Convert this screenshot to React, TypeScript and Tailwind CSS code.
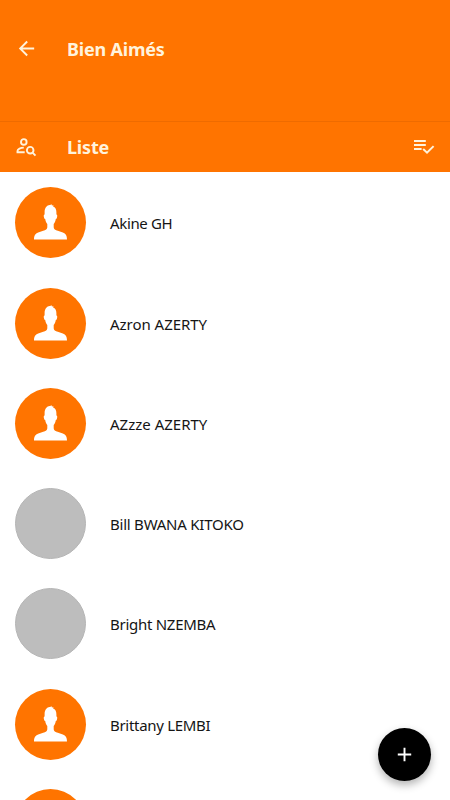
import { MdAdd, MdArrowBack } from "react-icons/md";

type Contact = { name: string; hasAvatar: boolean; tracking: string };

const contacts: Contact[] = [
  { name: "Akine GH", hasAvatar: true, tracking: "tracking-[-0.35px]" },
  { name: "Azron AZERTY", hasAvatar: true, tracking: "tracking-[-0.03px]" },
  { name: "AZzze AZERTY", hasAvatar: true, tracking: "tracking-normal" },
  { name: "Bill BWANA KITOKO", hasAvatar: false, tracking: "tracking-[-0.23px]" },
  { name: "Bright NZEMBA", hasAvatar: false, tracking: "tracking-[-0.27px]" },
  { name: "Brittany LEMBI", hasAvatar: true, tracking: "tracking-[-0.3px]" },
  { name: "", hasAvatar: true, tracking: "tracking-normal" },
];

function PersonSearchIcon() {
  return (
    <svg viewBox="0 0 24 24" className="size-6" fill="none" stroke="currentColor" strokeWidth="1.9">
      <circle cx="9.8" cy="6.9" r="2.8" />
      <path d="M9.8 12.6c-3.2.1-6.3 1.6-6.3 3.3v1.3h7.2" />
      <circle cx="16.2" cy="15.2" r="3.3" />
      <path d="M18.5 17.6l3 3" />
    </svg>
  );
}

function ListCheckIcon() {
  return (
    <svg viewBox="0 0 24 24" className="size-6" fill="none" stroke="currentColor" strokeWidth="2">
      <path d="M2 6.1h11.8M2 10h11.8M2 13.9h7.6" />
      <path d="M11.2 14.1l3.8 3.6 6.6-6.6" />
    </svg>
  );
}

function Avatar({ filled }: { filled: boolean }) {
  if (!filled) {
    return <div className="size-[71px] shrink-0 rounded-full border border-[#b5b5b5] bg-[#bdbdbd]" />;
  }
  return (
    <div className="size-[71px] shrink-0 rounded-full bg-[#ff7400]">
      <svg viewBox="0 0 71 71" className="size-full" fill="#fff">
        <path d="M36.6 17.2l.3 1.3 1.6-.3-.4 1.4c2.2.9 3.3 2.8 3.3 5.6v2.4c1 .1 1 1.4.6 2.8-.2.9-.6 1.5-1.2 1.6-.3 2.1-1 3.7-2.1 4.9v3.3c0 1.7 1.6 2.8 4.1 3.6l4.3 1.5c3.6 1.3 4.9 3 4.9 7.2H19c0-4.2 1.3-5.9 4.9-7.2l4.3-1.5c2.5-.8 4.1-1.9 4.1-3.6v-3.3c-1.1-1.2-1.8-2.8-2.1-4.9-.6-.1-1-.7-1.2-1.6-.4-1.4-.4-2.7.6-2.8v-2.4c0-4.4 2.4-6.9 5-7.1.9-.1 1.5-.4 2-.9z" />
      </svg>
    </div>
  );
}

function ContactRow({ contact }: { contact: Contact }) {
  return (
    <li className="flex h-[100.3px] shrink-0 items-center pl-[15px]">
      <Avatar filled={contact.hasAvatar} />
      <span className={`ml-6 whitespace-nowrap pt-px text-[15px] leading-5 text-[#151515] ${contact.tracking}`}>{contact.name}</span>
    </li>
  );
}

export default function App() {
  return (
    <div className="relative flex h-[800px] w-[450px] flex-col overflow-hidden bg-white font-['Noto_Sans',sans-serif]">
      <header className="h-[122px] shrink-0 border-b border-[#ee6b00] bg-[#ff7400] text-[#fff3dc]">
        <div className="flex h-[97px] items-center pl-[15px]">
          <MdArrowBack className="size-[23px]" />
          <h1 className="ml-[29px] text-lg font-bold tracking-[-0.2px]">Bien Aimés</h1>
        </div>
      </header>
      <div className="flex h-[50px] shrink-0 items-center bg-[#ff7400] pr-[14px] pl-[14px] text-[#fff3dc]">
        <PersonSearchIcon />
        <h2 className="ml-[29px] flex-1 text-lg font-bold tracking-[-0.2px]">Liste</h2>
        <ListCheckIcon />
      </div>
      <ul className="flex min-h-0 flex-1 flex-col overflow-hidden pt-[0.6px]">
        {contacts.map((c, i) => (
          <ContactRow key={i} contact={c} />
        ))}
      </ul>
      <button className="absolute right-[19px] bottom-[19px] flex size-[53px] items-center justify-center rounded-full bg-black text-white shadow-[0_4px_8px_rgba(0,0,0,0.3)]">
        <MdAdd className="size-[23px]" />
      </button>
    </div>
  );
}
